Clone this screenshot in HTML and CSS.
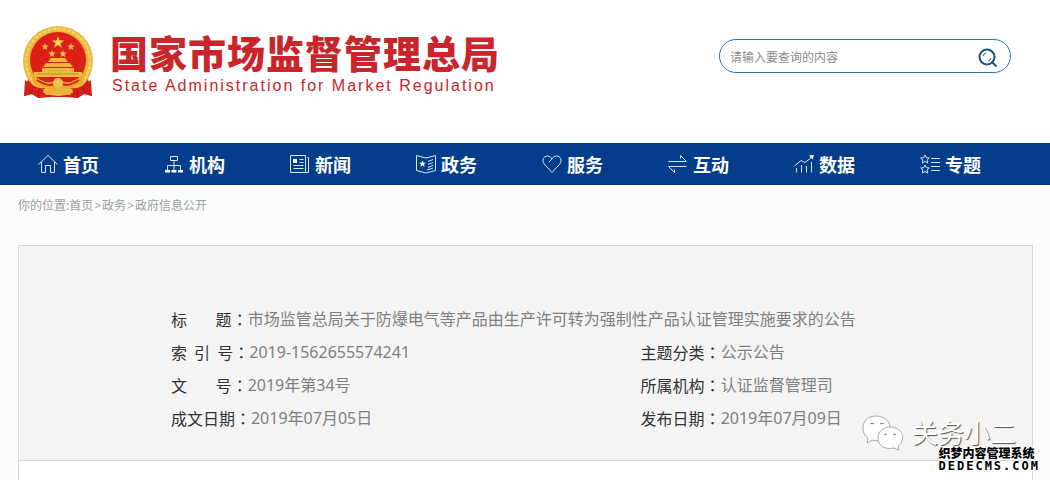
FILE: index.html
```html
<!DOCTYPE html>
<html lang="zh-CN">
  <head>
    <meta charset="UTF-8" />
    <meta name="viewport" content="width=device-width, initial-scale=1.0" />
    <title>国家市场监督管理总局</title>
    <link rel="stylesheet" href="styles.css">
  </head>
  <body>
    <header class="site-header">
      <div class="brand">
        <svg class="emblem" viewBox="0 0 70 72" aria-hidden="true">
          <path d="M6 48 L1 70 L9 68 L15 72 L28 71 L42 71 L55 72 L61 68 L69 70 L64 48 Z" fill="#d8201a" />
          <circle cx="35" cy="35" r="35" fill="#e6b53a" />
          <circle cx="35" cy="35" r="32" fill="none" stroke="#f3cf62" stroke-width="3" stroke-dasharray="4 1" />
          <circle cx="35" cy="34" r="28" fill="#dc1f17" />
          <path d="M35 10 l1.500 4.500 h4.700 l-3.800 2.800 1.500 4.500 -3.900-2.800 -3.900 2.800 1.500-4.500 -3.800-2.800 h4.700z" fill="#fbd84e" />
          <g fill="#f6c545">
            <path id="star" d="M22 17 l.9 2.600 h2.800 l-2.200 1.700 .8 2.700 -2.300-1.600 -2.300 1.600 .8-2.700 -2.200-1.700 h2.800z" />
            <use href="#star" x="7" y="7" />
            <use href="#star" x="18" y="7" />
            <use href="#star" x="26" />
          </g>
          <path d="M25 36 l3-4 h14 l3 4z M20 41 l3-4 h24 l3 4z M19 42 h32 v4 h-32z" fill="#f0b63a" />
          <path d="M11 46 h48 v5 h-48z" fill="#eebc42" />
          <path d="M14 48 h42" stroke="#c98a1d" />
          <path d="M7 45 Q18 58 29 56 L35 53 L41 56 Q52 58 63 45 L59 58 Q47 66 35 62 Q23 66 11 58Z" fill="#e6ac2f" />
          <path d="M14 54 Q24 61 31 58 M56 54 Q46 61 39 58" fill="none" stroke="#d2281a" stroke-width="2" />
          <circle cx="35" cy="57" r="5" fill="#f0c24b" />
          <path d="M2 54 Q14 64 22 62 L17 72 L9 68 L1 70z M68 54 Q56 64 48 62 L53 72 L61 68 L69 70z" fill="#d4201a" />
          <path d="M20 63 Q28 66 35 64 Q42 66 50 63 L47 69 Q35 67 23 69Z" fill="#e9b339" />
          <path d="M10 61 L8 68 M16 64 L15 71 M60 61 L62 68 M54 64 L55 71" stroke="#a81512" fill="none" />
        </svg>
        <div class="brand-text">
          <h1>国家市场监督管理总局</h1>
          <p>State Administration for Market Regulation</p>
        </div>
      </div>
      <form class="search">
        <input type="text" aria-label="查询内容" placeholder="请输入要查询的内容" />
        <button type="submit" aria-label="查询">
          <svg width="20" height="20" viewBox="0 0 20 20" fill="none" stroke="#1d4e84">
            <circle cx="9" cy="9" r="7.500" stroke-width="2" />
            <path d="M14.500 14.500 L18.500 18.500" stroke-width="2" />
            <path d="M5 8 Q5.500 5.500 8 5 M13 10 Q12.500 12.500 10 13" />
          </svg>
        </button>
      </form>
    </header>

    <nav class="main-nav">
      <a href="#">
        <svg viewBox="0 0 20 20"><path d="M.5 10.500 L10 1.500 L19.500 10.500 M3.500 8 V18.500 H7.500 V11.500 H12.500 V18.500 H16.500 V8" /></svg>
        首页
      </a>
      <a href="#">
        <svg viewBox="0 0 20 20"><path d="M6.500 2.500 h7 v4 h-7z M10 6.500 V16 M3.500 16 V11.500 H16.500 V16" /><path class="solid" d="M1 16h5v2.500h-5z M7.500 16h5v2.500h-5z M14 16h5v2.500h-5z" /></svg>
        机构
      </a>
      <a href="#">
        <svg viewBox="0 0 20 20"><path d="M.5 1.500 H15.500 V18.500 H.5z M17.500 3.500 H18.500 V18.500 H15.500 M9.500 5.500 H13.500 M9.500 8.500 H13.500 M3.500 11.500 H13.500 M3.500 14.500 H13.500" /><path class="solid" d="M3 5h4v4h-4z" /></svg>
        新闻
      </a>
      <a href="#">
        <svg viewBox="0 0 20 20"><path d="M.5 1.500 L10 4 L19.500 1.500 V16.500 L10 19 L.5 16.500z M12 7.500 L17 5.500 M12 10.500 L17 8.500 M12 13.500 L17 11.500 M11 16 L17 14" /><path class="solid" d="M6.500 6.500 l1 2.300 h2.300 l-1.800 1.500 .7 2.400 -2.200-1.500 -2.200 1.500 .7-2.400 -1.800-1.500 h2.300z" /></svg>
        政务
      </a>
      <a href="#">
        <svg viewBox="0 0 20 20"><path d="M10 18.500 L2.200 10 C-.5 6.500 1.500 2 5.500 2 C8 2 9 3.500 10 5 C11 3.500 12 2 14.500 2 C18.500 2 20.500 6.500 17.800 10z M10 5 L7 8" /></svg>
        服务
      </a>
      <a href="#">
        <svg viewBox="0 0 20 20"><path d="M.5 7.500 H18.500 L12.500 1.500 V4.500 M18.500 12.500 H.5 L6.500 18.500 V15.500" /></svg>
        互动
      </a>
      <a href="#">
        <svg viewBox="0 0 20 20"><path d="M.5 12 L7 6.500 L11 8.500 L18 3 M2.500 14 V18.500 M7.500 11 V18.500 M12.500 12 V18.500 M17.500 8 V18.500" /><path class="solid" d="M15 1.500 L20 1 L18.500 5.500z" /></svg>
        数据
      </a>
      <a href="#">
        <svg viewBox="0 0 20 20"><path d="M5 1 l1.300 2.700 3 .3 -2.200 2 .6 3 -2.700-1.500 -2.700 1.500 .6-3 -2.200-2 3-.3z M5 11 l1.300 2.700 3 .3 -2.200 2 .6 3 -2.700-1.500 -2.700 1.500 .6-3 -2.200-2 3-.3z M11 4.500 H20 M11 8.500 H20 M11 12.500 H20 M11 16.500 H20" /></svg>
        专题
      </a>
    </nav>

    <div class="breadcrumb">你的位置:<a href="#">首页</a><span>&gt;</span><a href="#">政务</a><span>&gt;</span><a href="#">政府信息公开</a></div>

    <main class="article">
      <dl class="meta">
        <div class="wide">
          <dt>标&nbsp;&nbsp;&nbsp;&nbsp;&nbsp;&nbsp;&nbsp;&nbsp;题<span lang="zh-TW">：</span></dt>
          <dd>市场监管总局关于防爆电气等产品由生产许可转为强制性产品认证管理实施要求的公告</dd>
        </div>
        <div>
          <dt>索&nbsp;&nbsp;引&nbsp;&nbsp;号<span lang="zh-TW">：</span></dt>
          <dd>2019-1562655574241</dd>
        </div>
        <div>
          <dt>主题分类<span lang="zh-TW">：</span></dt>
          <dd>公示公告</dd>
        </div>
        <div>
          <dt>文&nbsp;&nbsp;&nbsp;&nbsp;&nbsp;&nbsp;&nbsp;&nbsp;号<span lang="zh-TW">：</span></dt>
          <dd>2019年第34号</dd>
        </div>
        <div>
          <dt>所属机构<span lang="zh-TW">：</span></dt>
          <dd>认证监督管理司</dd>
        </div>
        <div>
          <dt>成文日期<span lang="zh-TW">：</span></dt>
          <dd>2019年07月05日</dd>
        </div>
        <div>
          <dt>发布日期<span lang="zh-TW">：</span></dt>
          <dd>2019年07月09日</dd>
        </div>
      </dl>
    </main>

    <!-- watermarks over the page corner -->
    <div class="account-mark">
      <svg width="42" height="36" viewBox="0 0 42 36" fill="#fff" stroke="#aaa">
        <path d="M14 1 C6 1 1 6 1 13 C1 18 3 21 6 23 L5 28 L10 25 C22 28 28 21 28 13 C28 6 22 1 14 1z" />
        <path d="M28 12 C21 12 16 17 16 23 C16 31 23 35 32 33 L37 35 L36 31 C45 24 40 12 28 12z" />
        <path d="M8 9 q2-2 4 0 M18 9 q2-2 4 0 M22 20 q2-2 3 0 M31 20 q2-2 3 0" fill="none" stroke="#777" />
      </svg>
      <span>关务小二</span>
    </div>
    <div class="cms-mark">
      <span>织梦内容管理系统</span>
      <span class="domain">DEDECMS.COM</span>
    </div>
  </body>
</html>
```
FILE: styles.css
```css
:root {
  --blue: #033d8b;
  --border: #d3d8e0;
  --red: #c9252b;
}

* {
  box-sizing: border-box;
}

body {
  position: relative;
  display: flex;
  flex-direction: column;
  min-height: 100vh;
  margin: 0;
  background-color: #fcfcfc;
  color: #333;
  font-family: "Noto Sans", "Noto Sans CJK SC", sans-serif;
  font-size: 16px;
}

a {
  color: inherit;
  text-decoration: none;
}

/* header */
.site-header {
  display: flex;
  justify-content: space-between;
  height: 143px;
  padding: 26px 39px 0 23px;
  background-color: #fff;
}

.brand {
  display: flex;
  gap: 17px;
}

.emblem {
  width: 70px;
  height: 72px;
}

.brand-text h1 {
  margin: 2px 0 0;
  color: var(--red);
  font-family: "Noto Sans CJK SC", sans-serif;
  font-size: 38px;
  font-weight: 900;
  line-height: 48px;
  letter-spacing: 1px;
  white-space: nowrap;
}

.brand-text p {
  margin: 0 0 0 2px;
  color: var(--red);
  font-family: "Liberation Sans", Arial, sans-serif;
  font-size: 16px;
  line-height: 20px;
  letter-spacing: 2px;
  white-space: nowrap;
}

.search {
  display: flex;
  align-items: center;
  width: 292px;
  height: 34px;
  margin-top: 13px;
  padding: 0 12px 0 10px;
  border: 1px solid #2f74ae;
  border-radius: 17px;
}

.search input {
  flex: 1;
  min-width: 0;
  padding: 0;
  border: none;
  outline: none;
  background: none;
  font-family: "Noto Sans CJK SC", sans-serif;
  font-size: 12px;
}

.search input::placeholder {
  color: #8c8c8c;
}

.search button {
  display: flex;
  padding: 4px 0 0;
  border: none;
  background: none;
  cursor: pointer;
}

/* navigation */
.main-nav {
  display: grid;
  grid-template-columns: repeat(8, 12vw);
  height: 42px;
  padding-left: 38px;
  background-color: var(--blue);
  color: #fff;
  font-family: "Noto Sans CJK SC", sans-serif;
  font-size: 18px;
  font-weight: bold;
}

.main-nav a {
  display: flex;
  align-items: center;
  gap: 5px;
  white-space: nowrap;
}

.main-nav svg {
  width: 20px;
  height: 20px;
  fill: none;
  stroke: #d5e6f7;
}

.main-nav .solid {
  fill: #fff;
  stroke: none;
}

.breadcrumb {
  margin: 11px 18px 29px;
  color: #999fa6;
  font-size: 12px;
  line-height: 20px;
}

.breadcrumb span {
  margin: 0 1px;
}

/* article */
.article {
  flex: 1;
  margin: 0 17px 0 18px;
  border: 1px solid var(--border);
  border-bottom: none;
  background-color: #fff;
}

.meta {
  display: grid;
  grid-template-columns: 6fr 5fr;
  margin: 0;
  padding: 57px 0 25px 15%;
  border-bottom: 1px solid var(--border);
  background-color: #f4f4f4;
  line-height: 33px;
}

.meta div {
  display: flex;
}

.meta .wide {
  grid-column: 1 / -1;
}

.meta dt {
  font-family: "Noto Sans CJK SC", sans-serif;
  white-space: nowrap;
}

/* full-width colon centred in its cell */
.meta dt span {
  font-family: "Noto Sans CJK TC", sans-serif;
}

.meta dd {
  margin: 0;
  color: #808080;
}

/* watermarks */
.account-mark {
  position: absolute;
  right: 34px;
  bottom: 29px;
  display: flex;
  align-items: center;
  gap: 8px;
  color: #fff;
  font-size: 26px;
  line-height: 36px;
  text-shadow: 1px 1px 1px #555;
}

.cms-mark {
  position: absolute;
  right: 10px;
  bottom: 8px;
  display: flex;
  flex-direction: column;
  color: #000;
  font-family: "Noto Sans CJK SC", sans-serif;
  font-size: 12px;
  font-weight: 900;
  line-height: 14px;
  text-shadow: 1px 0 #fff, -1px 0 #fff, 0 1px #fff, 0 -1px #fff, 0 0 2px #fff;
}

.cms-mark .domain {
  font-family: "DejaVu Sans Mono", monospace;
  font-size: 12px;
  letter-spacing: 2px;
  line-height: 12px;
}
```
